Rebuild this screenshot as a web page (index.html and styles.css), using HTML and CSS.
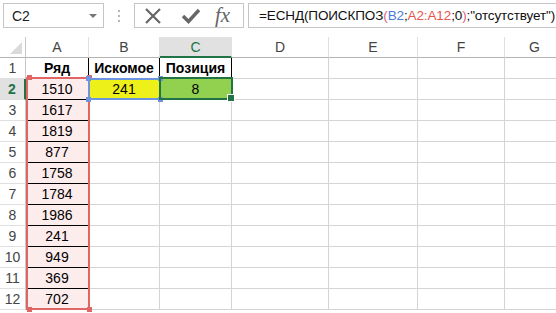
FILE: index.html
```html
<!DOCTYPE html>
<html>
<head>
    <meta charset="UTF-8">
    <title>ЕСНД ПОИСКПОЗ</title>
    <link rel="stylesheet" href="styles.css">
</head>
<body>
    <div class="toolbar">
        <div class="namebox">
            <span>C2</span>
            <span class="caret"></span>
        </div>
        <div class="grip"><i></i><i></i><i></i></div>
        <div class="fxbox">
            <svg width="18" height="18" viewBox="0 0 18 18"><path d="M2 2 L16 16 M16 2 L2 16" stroke="#666" stroke-width="2.2" fill="none"/></svg>
            <svg width="20" height="18" viewBox="0 0 20 18"><path d="M2 9 L7.5 14.5 L18 3" stroke="#666" stroke-width="3.4" fill="none"/></svg>
            <span class="fx">fx</span>
        </div>
        <div class="formula">=ЕСНД(ПОИСКПОЗ<span class="pk">(</span><span class="bl">B2</span>;<span class="rd">A2:A12</span>;0<span class="pk">)</span>;"отсутствует")</div>
    </div>

    <div class="sheet">
        <div class="corner"><span class="tri"></span></div>
        <div class="colhead">A</div>
        <div class="colhead">B</div>
        <div class="colhead active">C</div>
        <div class="colhead">D</div>
        <div class="colhead">E</div>
        <div class="colhead">F</div>
        <div class="colhead">G</div>

        <div class="rowhead">1</div>
        <div class="cell title">Ряд</div>
        <div class="cell title">Искомое</div>
        <div class="cell title">Позиция</div>
        <div class="cell"></div><div class="cell"></div><div class="cell"></div><div class="cell"></div>

        <div class="rowhead active">2</div>
        <div class="cell data">1510</div>
        <div class="cell yellow">241</div>
        <div class="cell green">8</div>
        <div class="cell"></div><div class="cell"></div><div class="cell"></div><div class="cell"></div>

        <div class="rowhead">3</div><div class="cell data">1617</div>
        <div class="cell"></div><div class="cell"></div><div class="cell"></div><div class="cell"></div><div class="cell"></div><div class="cell"></div>
        <div class="rowhead">4</div><div class="cell data">1819</div>
        <div class="cell"></div><div class="cell"></div><div class="cell"></div><div class="cell"></div><div class="cell"></div><div class="cell"></div>
        <div class="rowhead">5</div><div class="cell data">877</div>
        <div class="cell"></div><div class="cell"></div><div class="cell"></div><div class="cell"></div><div class="cell"></div><div class="cell"></div>
        <div class="rowhead">6</div><div class="cell data">1758</div>
        <div class="cell"></div><div class="cell"></div><div class="cell"></div><div class="cell"></div><div class="cell"></div><div class="cell"></div>
        <div class="rowhead">7</div><div class="cell data">1784</div>
        <div class="cell"></div><div class="cell"></div><div class="cell"></div><div class="cell"></div><div class="cell"></div><div class="cell"></div>
        <div class="rowhead">8</div><div class="cell data">1986</div>
        <div class="cell"></div><div class="cell"></div><div class="cell"></div><div class="cell"></div><div class="cell"></div><div class="cell"></div>
        <div class="rowhead">9</div><div class="cell data">241</div>
        <div class="cell"></div><div class="cell"></div><div class="cell"></div><div class="cell"></div><div class="cell"></div><div class="cell"></div>
        <div class="rowhead">10</div><div class="cell data">949</div>
        <div class="cell"></div><div class="cell"></div><div class="cell"></div><div class="cell"></div><div class="cell"></div><div class="cell"></div>
        <div class="rowhead">11</div><div class="cell data">369</div>
        <div class="cell"></div><div class="cell"></div><div class="cell"></div><div class="cell"></div><div class="cell"></div><div class="cell"></div>
        <div class="rowhead">12</div><div class="cell data last">702</div>
        <div class="cell"></div><div class="cell"></div><div class="cell"></div><div class="cell"></div><div class="cell"></div><div class="cell"></div>

        <!-- reference highlights drawn over the grid -->
        <div class="ref ref-red"><i class="tl"></i><i class="tr"></i><i class="bl"></i><i class="br"></i></div>
        <div class="ref ref-blue"><i class="tl"></i><i class="tr"></i><i class="bl"></i><i class="br"></i></div>
        <div class="cursor"><i class="handle"></i></div>
    </div>
</body>
</html>
```

FILE: styles.css
```css
body { margin: 0; background: #fff; font-family: "Liberation Sans", Arial, sans-serif; color: #000; width: 556px; height: 313px; overflow: hidden; }

.toolbar { display: flex; align-items: flex-start; height: 37px; padding: 3px 0 0 3px; box-sizing: border-box; }
.namebox { display: flex; align-items: center; justify-content: space-between; width: 101px; height: 25px; border: 1px solid #c6c6c6; box-sizing: border-box; padding: 0 6px 0 8px; font-size: 14px; color: #222; }
.caret { width: 0; height: 0; border-left: 4px solid transparent; border-right: 4px solid transparent; border-top: 4px solid #777; }
.grip { display: flex; flex-direction: column; gap: 3px; width: 3px; margin: 7px 13px 0 14px; }
.grip i { display: block; width: 2px; height: 2px; background: #b5b5b5; }
.fxbox { display: flex; align-items: center; gap: 0; width: 110px; height: 25px; border: 1px solid #c6c6c6; box-sizing: border-box; padding: 0 0 0 9px; }
.fxbox svg { display: block; }
.fxbox svg + svg { margin-left: 19px; }
.fx { margin-left: 14px; font-family: "Liberation Serif", serif; font-style: italic; font-size: 21px; color: #666; line-height: 1; }
.formula { flex: 1; height: 25px; margin-left: 4px; border: 1px solid #c6c6c6; border-right: none; box-sizing: border-box; padding: 4px 0 0 10px; font-size: 13.5px; letter-spacing: -0.12px; white-space: nowrap; overflow: hidden; color: #111; }
.pk { color: #e0607e; }
.bl { color: #4a7bd8; }
.rd { color: #e8554e; }

.sheet { position: relative; display: grid; grid-template-columns: 26px 63px 71px 72px 97px 89px 87px 60px; grid-template-rows: 21px repeat(12, 21px); }
.sheet > div { box-sizing: border-box; }

.corner { position: relative; border-right: 1px solid #c8c8c8; border-bottom: 1px solid #b4b4b4; }
.tri { position: absolute; right: 3px; bottom: 3px; width: 0; height: 0; border-left: 12px solid transparent; border-bottom: 12px solid #dadada; }
.colhead { display: flex; align-items: center; justify-content: center; font-size: 14px; color: #444; border-right: 1px solid #e0e0e0; border-bottom: 1px solid #b4b4b4; }
.colhead.active { background: #e1e1e1; color: #217346; border-bottom: 2px solid #217346; }
.rowhead { display: flex; align-items: center; justify-content: center; font-size: 14px; color: #444; border-right: 1px solid #c8c8c8; border-bottom: 1px solid #e0e0e0; }
.rowhead.active { background: #e1e1e1; color: #217346; font-weight: bold; border-right: 2px solid #217346; }

.cell { display: flex; align-items: center; justify-content: center; font-size: 14px; border-right: 1px solid #d4d4d4; border-bottom: 1px solid #d4d4d4; }
.cell.title { font-weight: bold; border-right-color: #000; }
.cell.data { background: #fdecec; border-bottom-color: #000; }
.cell.data.last { border-bottom-color: #d4d4d4; }
.cell.yellow { background: #eef019; }
.cell.green { background: #92d050; }

.ref { position: absolute; box-sizing: border-box; border: 2px solid; }
.ref i { position: absolute; width: 5px; height: 5px; }
.ref .tl { left: -4px; top: -4px; }
.ref .tr { right: -4px; top: -4px; }
.ref .bl { left: -4px; bottom: -4px; }
.ref .br { right: -4px; bottom: -4px; }
.ref-red { left: 26px; top: 40px; width: 64px; height: 233px; border-color: #e06666; }
.ref-red i { background: #e06666; }
.ref-red .tl, .ref-red .bl { left: -1px; }
.ref-blue { left: 88px; top: 41px; width: 73px; height: 22px; border-color: #6d94de; }
.ref-blue i { background: #6d94de; }
.cursor { position: absolute; left: 159px; top: 40px; width: 74px; height: 23px; border: 2px solid #217346; box-sizing: border-box; }
.handle { position: absolute; right: -4px; bottom: -4px; width: 6px; height: 6px; background: #217346; border: 1px solid #fff; }
```
